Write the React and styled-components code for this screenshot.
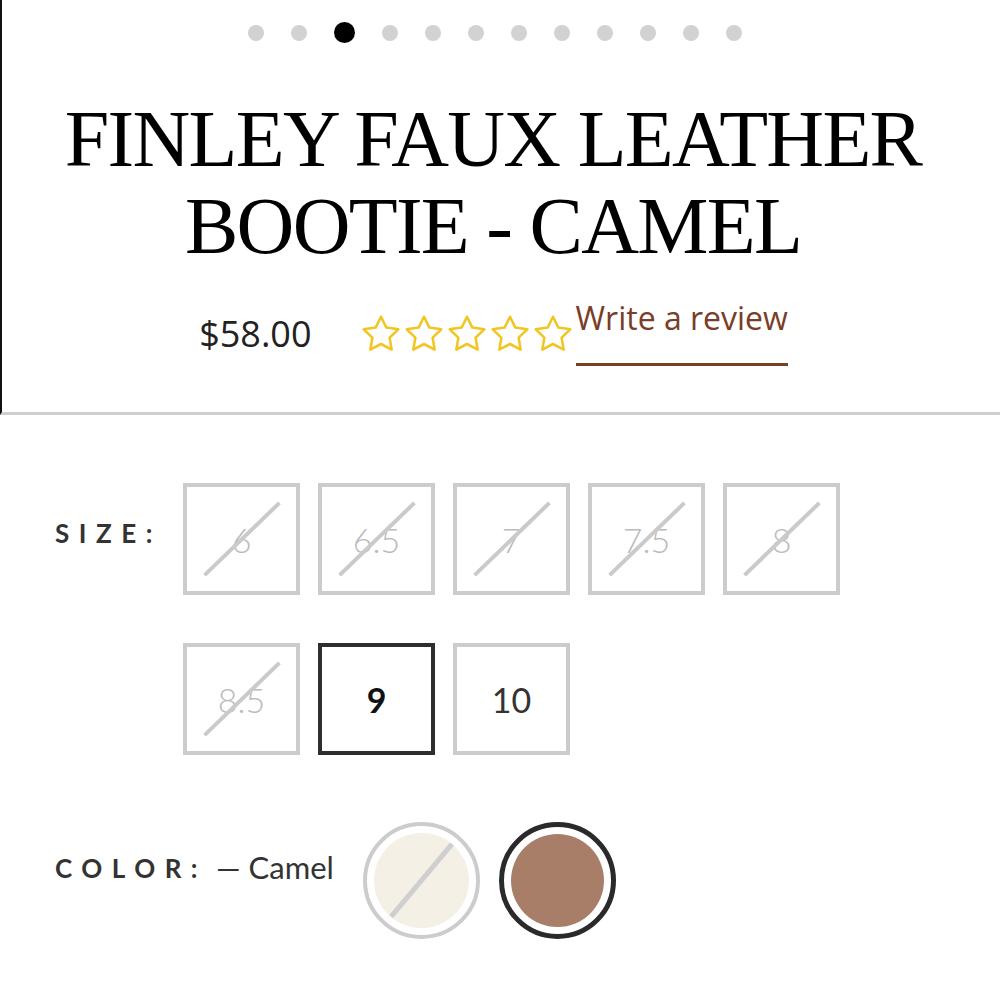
import React from "react";
import styled, { createGlobalStyle } from "styled-components";

const GlobalStyle = createGlobalStyle`
  html, body {
    margin: 0;
    padding: 0;
    background: #ffffff;
  }
  body {
    width: 1000px;
    height: 1000px;
    overflow: hidden;
  }
`;

const Page = styled.div`
  width: 1000px;
  height: 1000px;
  background: #fff;
`;

const Header = styled.section`
  height: 412px;
  border-left: 2px solid #111;
  border-bottom: 3px solid #cfcfcf;
  display: flex;
  flex-direction: column;
  align-items: center;
  padding-right: 16px;
`;

const Dots = styled.div`
  display: flex;
  align-items: center;
  gap: 27px;
  height: 21px;
  margin-top: 22px;
  padding-left: 4px;
`;

const Dot = styled.span`
  width: ${(p) => (p.$active ? 21 : 16)}px;
  height: ${(p) => (p.$active ? 21 : 16)}px;
  border-radius: 50%;
  background: ${(p) => (p.$active ? "#000" : "#d2d2d2")};
`;

const Title = styled.h1`
  margin: 53px 0 0;
  font-family: "Liberation Serif", "DejaVu Serif", serif;
  font-weight: 400;
  font-size: 80px;
  line-height: 87px;
  letter-spacing: -1.7px;
  text-align: center;
  color: #000;
`;

const PriceRow = styled.div`
  display: flex;
  align-items: center;
  margin-top: 29px;
  padding-left: 1px;
`;

const Price = styled.span`
  font-family: "Open Sans", "Noto Sans", sans-serif;
  font-size: 36px;
  color: #222;
  margin-right: 49px;
  margin-top: 2px;
`;

const Stars = styled.div`
  display: flex;
  gap: 3px;
  margin-right: 3px;
  margin-top: 2px;
`;

const ReviewLink = styled.a`
  font-family: "Open Sans", "Noto Sans", sans-serif;
  font-size: 32px;
  line-height: 38px;
  color: #7a3d28;
  text-decoration: none;
  padding-bottom: 26px;
  border-bottom: 3px solid #7a3d28;
`;

const Options = styled.section`
  padding: 68px 0 0 55px;
`;

const SizeRow = styled.div`
  display: flex;
  align-items: flex-start;
`;

const Label = styled.span`
  font-family: Lato, "Open Sans", sans-serif;
  font-weight: 700;
  font-size: 26px;
  line-height: 24px;
  letter-spacing: 9.5px;
  color: #333;
  width: ${(p) => p.$width || "auto"};
  margin-top: ${(p) => p.$top}px;
  flex-shrink: 0;
`;

const SizeGrid = styled.div`
  display: grid;
  grid-template-columns: repeat(5, 117px);
  column-gap: 18px;
  row-gap: 48px;
`;

const SizeBox = styled.button`
  position: relative;
  box-sizing: border-box;
  width: 117px;
  height: 112px;
  padding: 0;
  background: #fff;
  border: 4px solid ${(p) => (p.$selected ? "#2e2e2e" : "#cccccc")};
  font-family: Lato, "Open Sans", sans-serif;
  font-size: 34px;
  font-weight: ${(p) => (p.$selected ? 700 : p.$disabled ? 300 : 400)};
  color: ${(p) => (p.$selected ? "#111" : p.$disabled ? "#bbbbbb" : "#333")};
  display: flex;
  align-items: center;
  justify-content: center;
  cursor: pointer;
  overflow: hidden;

  ${(p) =>
    p.$disabled &&
    `
    &::after {
      content: "";
      position: absolute;
      left: 50%;
      top: 50%;
      width: 104px;
      height: 4px;
      background: #cacaca;
      transform: translate(-50%, -50%) rotate(-44deg);
    }
  `}
`;

const ColorRow = styled.div`
  display: flex;
  align-items: flex-start;
  margin-top: 67px;
`;

const ColorName = styled.span`
  font-family: Lato, "Open Sans", sans-serif;
  font-size: 31px;
  line-height: 34px;
  color: #333;
  margin: 28px 29px 0 9px;
`;

const Swatches = styled.div`
  display: flex;
  gap: 19px;
`;

const Swatch = styled.button`
  position: relative;
  box-sizing: border-box;
  width: 117px;
  height: 117px;
  border-radius: 50%;
  padding: 7px;
  background: #fff;
  border: ${(p) => (p.$selected ? "5px solid #2a2a2a" : "4px solid #cccccc")};
  cursor: pointer;
`;

const SwatchFill = styled.span`
  position: relative;
  display: block;
  width: 100%;
  height: 100%;
  border-radius: 50%;
  background: ${(p) => p.$color};
  overflow: hidden;

  ${(p) =>
    p.$disabled &&
    `
    &::after {
      content: "";
      position: absolute;
      left: 50%;
      top: 50%;
      width: 110px;
      height: 5px;
      background: #cfcfcf;
      transform: translate(-50%, -50%) rotate(-50deg);
    }
  `}
`;

function Star() {
  return (
    <svg width="40" height="40" viewBox="1 1 22 22" fill="none">
      <path
        d="M12 2.5l2.94 5.96 6.56.95-4.75 4.63 1.12 6.54L12 17.5l-5.87 3.08 1.12-6.54L2.5 9.41l6.56-.95L12 2.5z"
        stroke="#f2c522"
        strokeWidth="1.4"
        strokeLinejoin="round"
      />
    </svg>
  );
}

const sizes = [
  { label: "6", disabled: true },
  { label: "6.5", disabled: true },
  { label: "7", disabled: true },
  { label: "7.5", disabled: true },
  { label: "8", disabled: true },
  { label: "8.5", disabled: true },
  { label: "9", selected: true },
  { label: "10" },
];

export default function App() {
  return (
    <Page>
      <GlobalStyle />
      <Header>
        <Dots>
          {Array.from({ length: 12 }).map((_, i) => (
            <Dot key={i} $active={i === 2} />
          ))}
        </Dots>
        <Title>
          FINLEY FAUX LEATHER
          <br />
          BOOTIE - CAMEL
        </Title>
        <PriceRow>
          <Price>$58.00</Price>
          <Stars>
            {[0, 1, 2, 3, 4].map((i) => (
              <Star key={i} />
            ))}
          </Stars>
          <ReviewLink href="#">Write a review</ReviewLink>
        </PriceRow>
      </Header>
      <Options>
        <SizeRow>
          <Label $width="128px" $top={38}>SIZE:</Label>
          <SizeGrid>
            {sizes.map((s) => (
              <SizeBox key={s.label} $disabled={s.disabled} $selected={s.selected}>
                {s.label}
              </SizeBox>
            ))}
          </SizeGrid>
        </SizeRow>
        <ColorRow>
          <Label $top={34}>COLOR:</Label>
          <ColorName>— Camel</ColorName>
          <Swatches>
            <Swatch>
              <SwatchFill $color="#f5f0e6" $disabled />
            </Swatch>
            <Swatch $selected>
              <SwatchFill $color="#a87e68" />
            </Swatch>
          </Swatches>
        </ColorRow>
      </Options>
    </Page>
  );
}
